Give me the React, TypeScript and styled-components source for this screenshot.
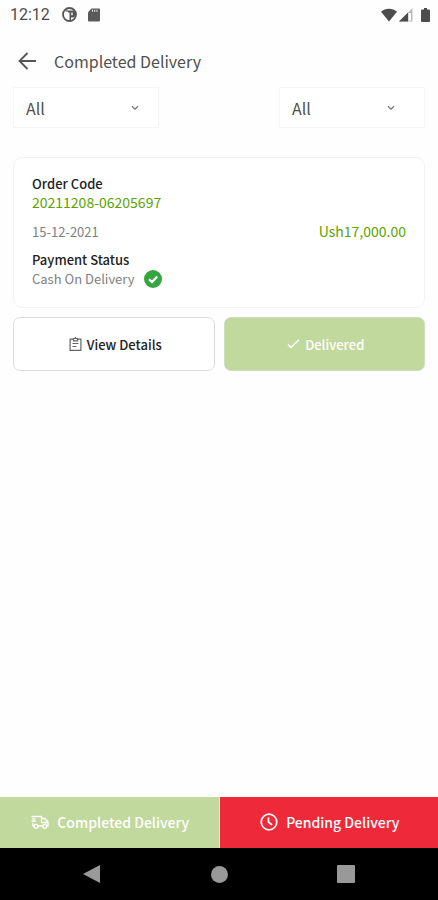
import React from "react";
import styled, { createGlobalStyle } from "styled-components";

const GlobalStyle = createGlobalStyle`
  *, *::before, *::after { box-sizing: border-box; }
  body { margin: 0; background: #fefefe; }
  body, button, select {
    font-family: "Noto Sans CJK SC", "Noto Sans", sans-serif;
  }
  svg { display: block; flex: none; }
`;

const Screen = styled.div`
  min-height: 100vh;
  display: flex;
  flex-direction: column;
`;

const StatusBar = styled.div`
  display: flex;
  align-items: center;
  height: 28px;
  padding: 1px 8px 0 10px;
  color: #4c4c4c;
`;

const Clock = styled.span`
  font-family: Roboto, sans-serif;
  font-size: 16px;
  line-height: 28px;
  margin-right: 12px;
`;

const StatusIcons = styled.div<{ $gap: number }>`
  display: flex;
  align-items: center;
  gap: ${(p) => p.$gap}px;
`;

const Spacer = styled.div`
  flex: 1;
`;

const Header = styled.header`
  display: flex;
  align-items: center;
  gap: 16px;
  height: 59px;
  padding: 7px 16px 0;
`;

const BackButton = styled.button`
  padding: 0;
  border: 0;
  background: none;
  color: #555;
`;

const Title = styled.h1`
  margin: 0;
  font-size: 16px;
  line-height: 24px;
  font-weight: 400;
  color: #505050;
`;

const Main = styled.main`
  flex: 1;
  padding: 0 13px;
`;

const Filters = styled.div`
  display: flex;
  justify-content: space-between;
  margin-bottom: 29px;
`;

const FilterBox = styled.div<{ $chevronInset: number }>`
  display: grid;
  grid-template: 39px / 144px;
  align-items: center;
  border: 1px solid #f5f5f5;
  background: #fff;

  > * { grid-area: 1 / 1; }

  svg {
    justify-self: end;
    margin-right: ${(p) => p.$chevronInset}px;
    pointer-events: none;
    color: #777;
  }
`;

const Select = styled.select`
  width: 100%;
  height: 100%;
  padding: 0 12px;
  appearance: none;
  border: 0;
  background: none;
  font-size: 16px;
  color: #505050;
`;

const Card = styled.section`
  display: flex;
  flex-direction: column;
  gap: 10px;
  margin-bottom: 9px;
  padding: 16px 18px 19px;
  border: 1px solid #f3f3f3;
  border-radius: 9px;
  background: #fff;
`;

const Line = styled.div`
  display: flex;
  align-items: center;
  gap: 9px;
  font-size: 13px;
  line-height: 19px;
`;

const Label = styled(Line)`
  font-weight: 500;
  color: #222;
`;

const Muted = styled(Line)`
  color: #808080;
`;

const Highlight = styled(Line)`
  font-size: 14px;
  color: #5ba300;
`;

const Row = styled.div`
  display: flex;
  justify-content: space-between;
`;

const Payment = styled.div`
  margin-top: -1px;
`;

const Actions = styled.div`
  display: grid;
  grid-template-columns: 1fr 1fr;
  gap: 9px;
`;

const ActionButton = styled.button<{ $filled?: boolean }>`
  display: flex;
  align-items: center;
  justify-content: center;
  gap: 5px;
  height: 54px;
  padding: 0 0 0 3px;
  border: 1px solid ${(p) => (p.$filled ? "#cfdfbb" : "#dcdcdc")};
  border-radius: 7px;
  background: ${(p) => (p.$filled ? "#c1d99d" : "#fff")};
  color: ${(p) => (p.$filled ? "#fff" : "#222")};
  font-size: 13px;
  font-weight: 500;
`;

const Tabs = styled.nav`
  display: grid;
  grid-template-columns: 1fr 1fr;
  gap: 1px;
  background: #f6dfc6;
`;

const TabButton = styled.button<{ $color: string }>`
  display: flex;
  align-items: center;
  justify-content: center;
  gap: 8px;
  height: 51px;
  padding: 0 0 2px 2px;
  border: 0;
  background: ${(p) => p.$color};
  color: #fff;
  font-size: 14px;
  font-weight: 500;
`;

const SystemBar = styled.div`
  display: flex;
  align-items: center;
  justify-content: space-between;
  height: 52px;
  padding: 0 83px;
  background: #000;
`;

const SystemButton = styled.button`
  padding: 0;
  border: 0;
  background: none;
  color: #999;
`;

const Chevron = () => (
  <svg width="8" height="6" viewBox="0 0 8 6" fill="none" stroke="currentColor" strokeWidth="1.3">
    <path d="M1 1.2 4 4.2 7 1.2" />
  </svg>
);

const StatusApp = () => (
  <svg width="15" height="15" viewBox="0 0 15 15">
    <circle cx="7.5" cy="7.5" r="6.5" fill="#fff" stroke="#555" strokeWidth="1.8" />
    <path d="M6 3.5h5.500a2 2 0 0 1 1.500 2v3a2 2 0 0 1-2 2H9v2.500H7.500V5.500H6z" fill="#555" />
    <path d="M9.300 5.500h1.400v2.800H9.300z" fill="#fff" />
    <path d="M3.500 4h2.500" stroke="#555" strokeWidth="1.200" />
  </svg>
);

const SdCard = () => (
  <svg width="12" height="14" viewBox="0 0 12 14" fill="#5a5a5a">
    <path d="M3.5.5H11a1 1 0 0 1 1 1v11a1 1 0 0 1-1 1H1a1 1 0 0 1-1-1V4.2z" />
    <path d="M4.5 1.8v2M6.7 1.8v2M8.9 1.8v2" stroke="#ddd" strokeWidth="1.2" />
  </svg>
);

const Wifi = () => (
  <svg width="16" height="14" viewBox="0 0 16 14" fill="#4c4c4c">
    <path d="M8 13.5 0 3.8C2.2 1.8 5 .8 8 .8s5.8 1 8 3z" />
  </svg>
);

const Signal = () => (
  <svg width="14" height="14" viewBox="0 0 14 14">
    <path d="M0 13.5 13.5 0v13.5z" fill="#bbb" />
    <path d="M0 13.5 9 4.5v9z" fill="#4c4c4c" />
    <path d="M9.5 5H12v7.5H9.5z" fill="#fff" />
  </svg>
);

const Battery = () => (
  <svg width="9" height="14" viewBox="0 0 9 14" fill="#4c4c4c">
    <path d="M3 0h3v1.5h2a1 1 0 0 1 1 1V13a1 1 0 0 1-1 1H1a1 1 0 0 1-1-1V2.5a1 1 0 0 1 1-1h2z" />
  </svg>
);

const BackArrow = () => (
  <svg width="22" height="22" viewBox="0 0 22 22" fill="none" stroke="currentColor" strokeWidth="1.8">
    <path d="M20 11H4M11.5 3 3.5 11l8 8" />
  </svg>
);

const PaidBadge = () => (
  <svg width="18" height="18" viewBox="0 0 18 18" role="img" aria-label="Paid">
    <circle cx="9" cy="9" r="9" fill="#35a540" />
    <path d="m5 9.2 3 2.9 5.2-5.6" fill="none" stroke="#fff" strokeWidth="2.2" />
  </svg>
);

const Clipboard = () => (
  <svg width="13" height="14" viewBox="0 0 13 14" fill="none" stroke="#666" strokeWidth="1.2">
    <path d="M4.5 2.2H1.1v11.1h10.8V2.2H8.5M4.5 1.5h4v2.3h-4zM6.5 0v2M3.5 6.5h6M3.5 9.5h4" />
  </svg>
);

const Check = () => (
  <svg width="13" height="10" viewBox="0 0 13 10" fill="none" stroke="#fff" strokeWidth="1.5">
    <path d="m1 5.5 3 3L12 .8" />
  </svg>
);

const Truck = () => (
  <svg width="18" height="14" viewBox="0 0 18 14" fill="none" stroke="#fff" strokeWidth="1.3" strokeLinejoin="round" strokeLinecap="round">
    <path d="M2.6 11H2V8.5M1 6h3.500M1 1.500h9.500V3.500M1.500 3.800h2.500M10.500 3.500h3.300L17 7v4h-1M10.500 3.500v4H17M7.500 11h4" />
    <circle cx="5" cy="11.2" r="1.9" />
    <circle cx="13.8" cy="11.2" r="1.9" />
  </svg>
);

const ClockIcon = () => (
  <svg width="18" height="18" viewBox="0 0 18 18" fill="none" stroke="#fff" strokeWidth="1.7">
    <circle cx="9" cy="9" r="7.8" />
    <path d="M8.5 4.5V9l3.5 3" />
  </svg>
);

const Filter = ({ label, inset }: { label: string; inset: number }) => (
  <FilterBox $chevronInset={inset}>
    <Select aria-label={label} defaultValue="all">
      <option value="all">All</option>
    </Select>
    <Chevron />
  </FilterBox>
);

export default function App() {
  return (
    <Screen>
      <GlobalStyle />
      <StatusBar>
        <Clock>12:12</Clock>
        <StatusIcons $gap={11}>
          <StatusApp />
          <SdCard />
        </StatusIcons>
        <Spacer />
        <StatusIcons $gap={8}>
          <StatusIcons $gap={2}>
            <Wifi />
            <Signal />
          </StatusIcons>
          <Battery />
        </StatusIcons>
      </StatusBar>
      <Header>
        <BackButton aria-label="Back">
          <BackArrow />
        </BackButton>
        <Title>Completed Delivery</Title>
      </Header>
      <Main>
        <Filters>
          <Filter label="Date" inset={19} />
          <Filter label="Payment status" inset={29} />
        </Filters>
        <Card>
          <div>
            <Label>Order Code</Label>
            <Highlight>20211208-06205697</Highlight>
          </div>
          <Row>
            <Muted>15-12-2021</Muted>
            <Highlight>Ush17,000.00</Highlight>
          </Row>
          <Payment>
            <Label>Payment Status</Label>
            <Muted>
              Cash On Delivery
              <PaidBadge />
            </Muted>
          </Payment>
        </Card>
        <Actions>
          <ActionButton>
            <Clipboard />
            View Details
          </ActionButton>
          <ActionButton $filled>
            <Check />
            Delivered
          </ActionButton>
        </Actions>
      </Main>
      <Tabs>
        <TabButton $color="#c1d99d">
          <Truck />
          Completed Delivery
        </TabButton>
        <TabButton $color="#ee2939">
          <ClockIcon />
          Pending Delivery
        </TabButton>
      </Tabs>
      <SystemBar>
        <SystemButton aria-label="System back">
          <svg width="18" height="18" viewBox="0 0 18 18" fill="currentColor">
            <path d="M0 9 17 0v18z" />
          </svg>
        </SystemButton>
        <SystemButton aria-label="Home">
          <svg width="17" height="17" viewBox="0 0 17 17" fill="currentColor">
            <circle cx="8.5" cy="8.5" r="8.5" />
          </svg>
        </SystemButton>
        <SystemButton aria-label="Recent apps">
          <svg width="18" height="18" viewBox="0 0 18 18" fill="currentColor">
            <rect width="18" height="18" rx="1" />
          </svg>
        </SystemButton>
      </SystemBar>
    </Screen>
  );
}
